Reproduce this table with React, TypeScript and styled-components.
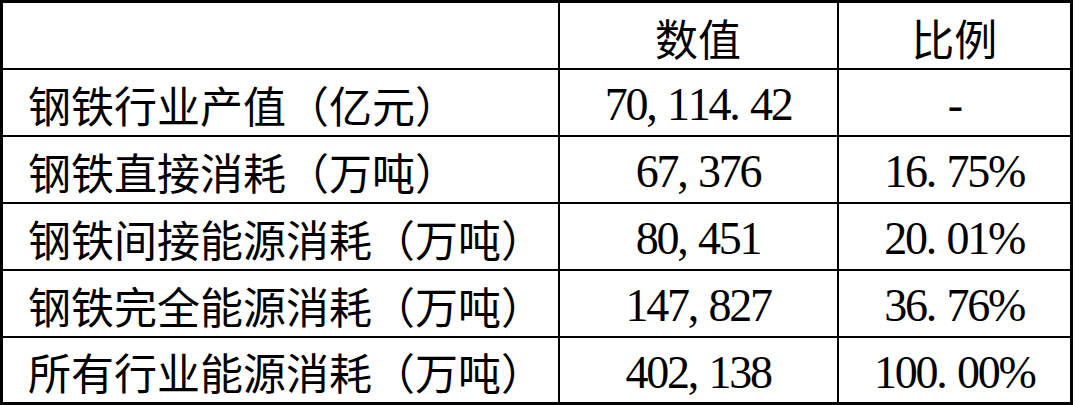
import { createGlobalStyle } from "styled-components";
import styled from "styled-components";

const GlobalStyle = createGlobalStyle`
  body {
    margin: 0;
    background: #fff;
  }
`;

const Table = styled.table`
  border-collapse: collapse;
  table-layout: fixed;
  width: 1073px;
  border: 3px solid #000;
  color: #000;
`;

const Row = styled.tr`
  height: 67px;
`;

const Cell = styled.td<{ $label?: boolean }>`
  border: 2px solid #000;
  padding: 4px 0 0 ${(p) => (p.$label ? "25px" : "0")};
  text-align: ${(p) => (p.$label ? "left" : "center")};
  vertical-align: middle;
  white-space: nowrap;
  font-family: "Noto Sans CJK SC", sans-serif;
  font-size: 43px;
  line-height: 1;
  text-spacing-trim: space-all;
  font-kerning: none;
`;

const Number = styled.span`
  font-family: "Liberation Serif", serif;
  font-size: 46px;
  letter-spacing: -2.25px;
  line-height: 1;
`;

const Punct = styled.span`
  margin-right: 11.5px;
`;

const Num = ({ value }: { value: string }) => {
  const parts = value.split(/([.,])/).filter((s) => s !== "");
  return (
    <Number>
      {parts.map((s, i) =>
        s === "," || s === "." ? <Punct key={i}>{s}</Punct> : s
      )}
    </Number>
  );
};

const rows = [
  { label: "钢铁行业产值（亿元）", value: "70,114.42", ratio: "-" },
  { label: "钢铁直接消耗（万吨）", value: "67,376", ratio: "16.75%" },
  { label: "钢铁间接能源消耗（万吨）", value: "80,451", ratio: "20.01%" },
  { label: "钢铁完全能源消耗（万吨）", value: "147,827", ratio: "36.76%" },
  { label: "所有行业能源消耗（万吨）", value: "402,138", ratio: "100.00%" },
];

const App = () => {
  return (
    <>
      <GlobalStyle />
      <Table>
        <colgroup>
          <col style={{ width: 557 }} />
          <col style={{ width: 279 }} />
          <col />
        </colgroup>
        <tbody>
          <Row>
            <Cell $label />
            <Cell>数值</Cell>
            <Cell>比例</Cell>
          </Row>
          {rows.map((r) => (
            <Row key={r.label}>
              <Cell $label>{r.label}</Cell>
              <Cell>
                <Num value={r.value} />
              </Cell>
              <Cell>
                <Num value={r.ratio} />
              </Cell>
            </Row>
          ))}
        </tbody>
      </Table>
    </>
  );
};

export default App;
